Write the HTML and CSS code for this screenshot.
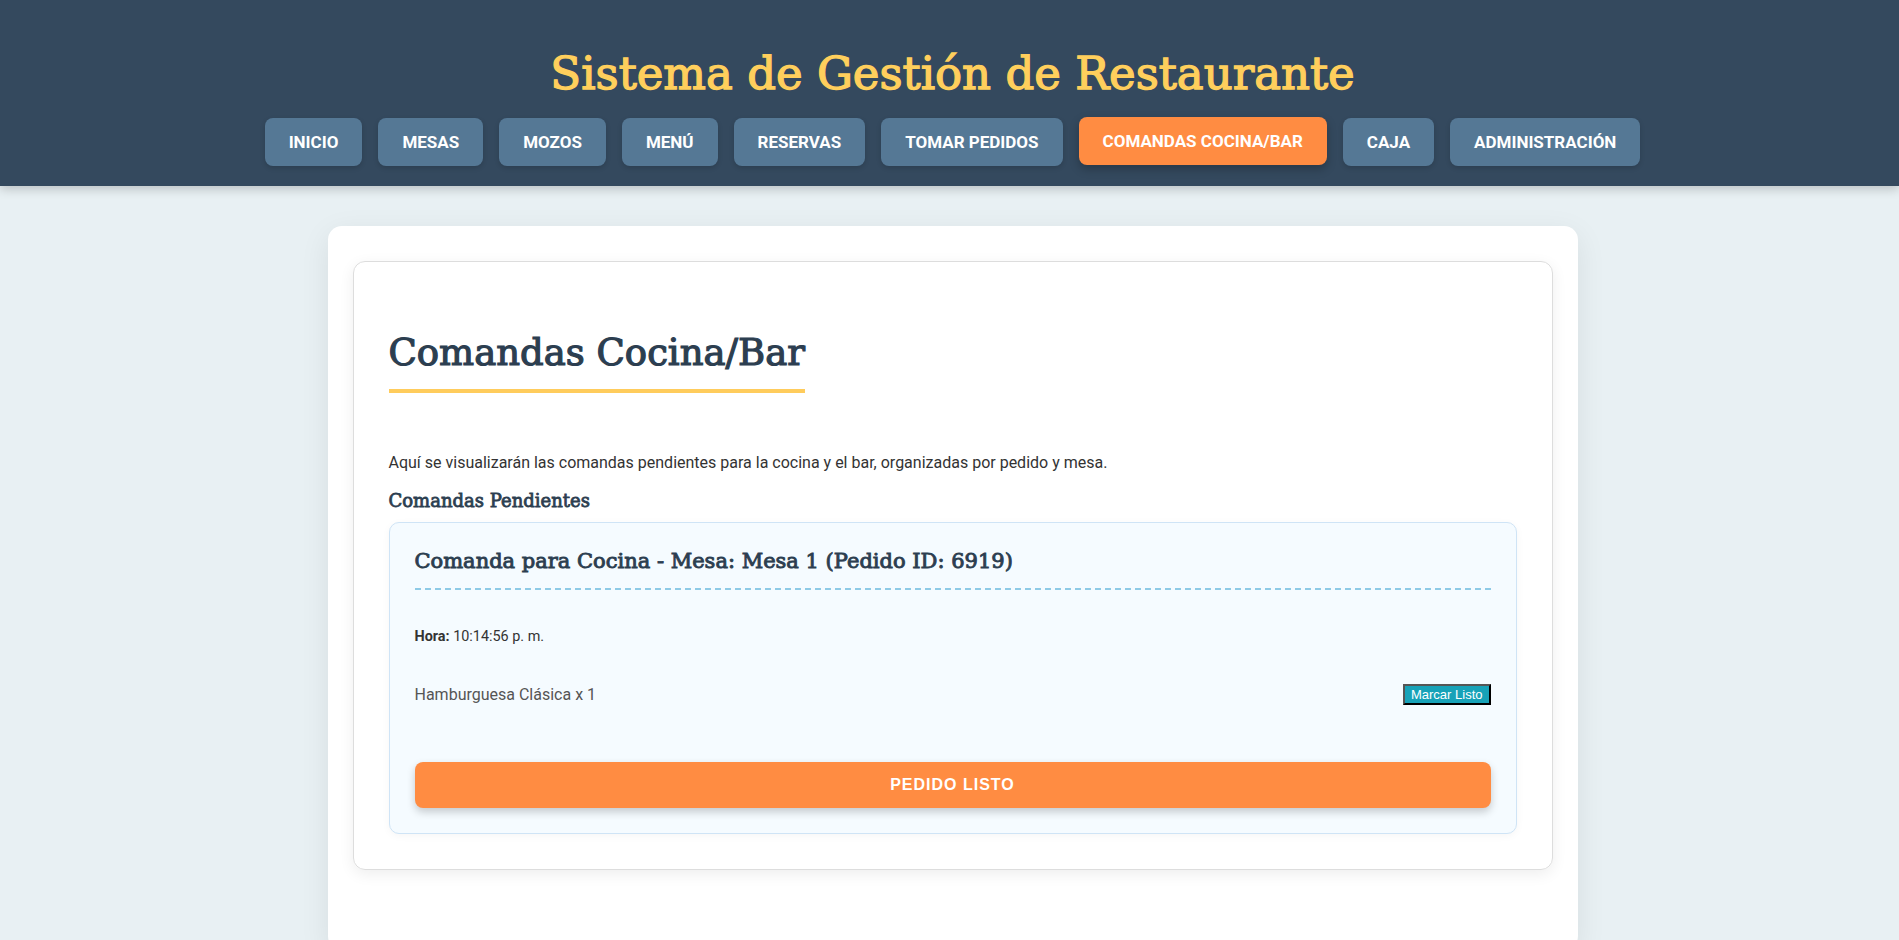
FILE: index.html
```html
<!DOCTYPE html>
<html lang="es">
<head>
<meta charset="utf-8">
<title>Sistema de Gestión de Restaurante</title>
<link rel="stylesheet" href="styles.css">
</head>
<body>
<header class="site-header">
  <h1 class="site-title">Sistema de Gestión de Restaurante</h1>
  <nav class="main-nav">
    <a class="nav-btn" href="#">Inicio</a>
    <a class="nav-btn" href="#">Mesas</a>
    <a class="nav-btn" href="#">Mozos</a>
    <a class="nav-btn" href="#">Menú</a>
    <a class="nav-btn" href="#">Reservas</a>
    <a class="nav-btn" href="#">Tomar Pedidos</a>
    <a class="nav-btn active" href="#">Comandas Cocina/Bar</a>
    <a class="nav-btn" href="#">Caja</a>
    <a class="nav-btn" href="#">Administración</a>
  </nav>
</header>
<main class="container">
  <section class="panel">
    <h2 class="panel-title">Comandas Cocina/Bar</h2>
    <p class="intro">Aquí se visualizarán las comandas pendientes para la cocina y el bar, organizadas por pedido y mesa.</p>
    <h3 class="sub-title">Comandas Pendientes</h3>
    <div class="comanda">
      <h4 class="comanda-title">Comanda para Cocina - Mesa: Mesa 1 (Pedido ID: 6919)</h4>
      <p class="comanda-time"><strong>Hora:</strong> 10:14:56 p. m.</p>
      <ul class="items">
        <li class="item"><span class="item-name">Hamburguesa Clásica x 1</span><button class="mark-btn">Marcar Listo</button></li>
      </ul>
      <button class="done-btn">Pedido Listo</button>
    </div>
  </section>
</main>
</body>
</html>
```
FILE: styles.css
```css
html, body {
  margin: 0;
  padding: 0;
}
body {
  background: #e8f0f3;
  font-family: Roboto, "Liberation Sans", Arial, sans-serif;
  color: #333;
  font-size: 16px;
}
.site-header {
  background: #34495e;
  padding: 48px 14px 20px 20px;
  box-shadow: 0 3px 10px rgba(0, 0, 0, 0.2);
  text-align: center;
}
.site-title {
  margin: 0 0 18px;
  font-family: "DejaVu Serif", "Liberation Serif", serif;
  font-weight: 400;
  font-size: 45px;
  line-height: 52px;
  color: #ffcf5c;
  -webkit-text-stroke: 1.3px #ffcf5c;
}
.main-nav {
  display: flex;
  justify-content: center;
  gap: 16px;
}
.nav-btn {
  display: block;
  background: #557895;
  color: #fff;
  text-decoration: none;
  text-transform: uppercase;
  font-weight: 700;
  font-size: 17px;
  line-height: 24px;
  padding: 12px 24px;
  border-radius: 8px;
  box-shadow: 0 2px 5px rgba(0, 0, 0, 0.15);
}
.nav-btn.active {
  background: #ff8c42;
  transform: translateY(-1px);
  box-shadow: 0 4px 10px rgba(0, 0, 0, 0.25);
}
.container {
  width: 1200px;
  margin: 40px auto 0 calc(50% - 622px);
  padding: 35px 25px 80px;
  background: #fff;
  border-radius: 14px;
  box-shadow: 0 8px 30px rgba(0, 0, 0, 0.08);
}
.panel {
  border: 1px solid #ddd;
  border-radius: 12px;
  padding: 35px;
  box-shadow: 0 4px 15px rgba(0, 0, 0, 0.07);
}
.panel-title {
  display: inline-block;
  margin: 32px 0 57px;
  padding-bottom: 12px;
  border-bottom: 4px solid #ffcc5c;
  font-family: "DejaVu Serif", "Liberation Serif", serif;
  font-weight: 400;
  font-size: 37px;
  line-height: 48px;
  color: #2c3e50;
  -webkit-text-stroke: 1.2px #2c3e50;
}
.intro {
  margin: 0 0 13px;
  line-height: 25.6px;
}
.sub-title {
  margin: 0 0 10px;
  font-family: "DejaVu Serif", "Liberation Serif", serif;
  font-weight: 400;
  font-size: 18px;
  line-height: 23px;
  color: #2c3e50;
  -webkit-text-stroke: 0.8px #2c3e50;
}
.comanda {
  background: #f5fbff;
  border: 1px solid #cfe4f6;
  border-radius: 10px;
  padding: 25px;
  box-shadow: 0 2px 8px rgba(0, 0, 0, 0.04);
}
.comanda-title {
  margin: 0;
  padding-bottom: 14px;
  border-bottom: 2px dashed #8ecae6;
  font-family: "DejaVu Serif", "Liberation Serif", serif;
  font-weight: 400;
  font-size: 21px;
  line-height: 26px;
  color: #2c3e50;
  -webkit-text-stroke: 0.9px #2c3e50;
}
.comanda-time {
  margin: 34px 0 23px;
  line-height: 25.6px;
  font-size: 14.4px;
}
.comanda-time strong {
  font-weight: 700;
}
.items {
  list-style: none;
  margin: 0 0 44px;
  padding: 0;
}
.item {
  display: flex;
  justify-content: space-between;
  align-items: center;
  padding: 10px 0;
  color: #555;
  font-size: 16px;
  line-height: 25.6px;
}
.mark-btn {
  background: #17a2b8;
  color: #fff;
  font-family: "Liberation Sans", Arial, sans-serif;
  font-size: 13px;
  line-height: 15px;
  padding: 1px 6px;
  border: 2px outset #555;
}
.done-btn {
  display: block;
  width: 100%;
  height: 46px;
  background: #ff8c42;
  color: #fff;
  border: none;
  border-radius: 8px;
  font-family: "Liberation Sans", Arial, sans-serif;
  font-weight: 700;
  font-size: 16px;
  letter-spacing: 1px;
  text-transform: uppercase;
  box-shadow: 0 4px 8px rgba(0, 0, 0, 0.2);
}
```
